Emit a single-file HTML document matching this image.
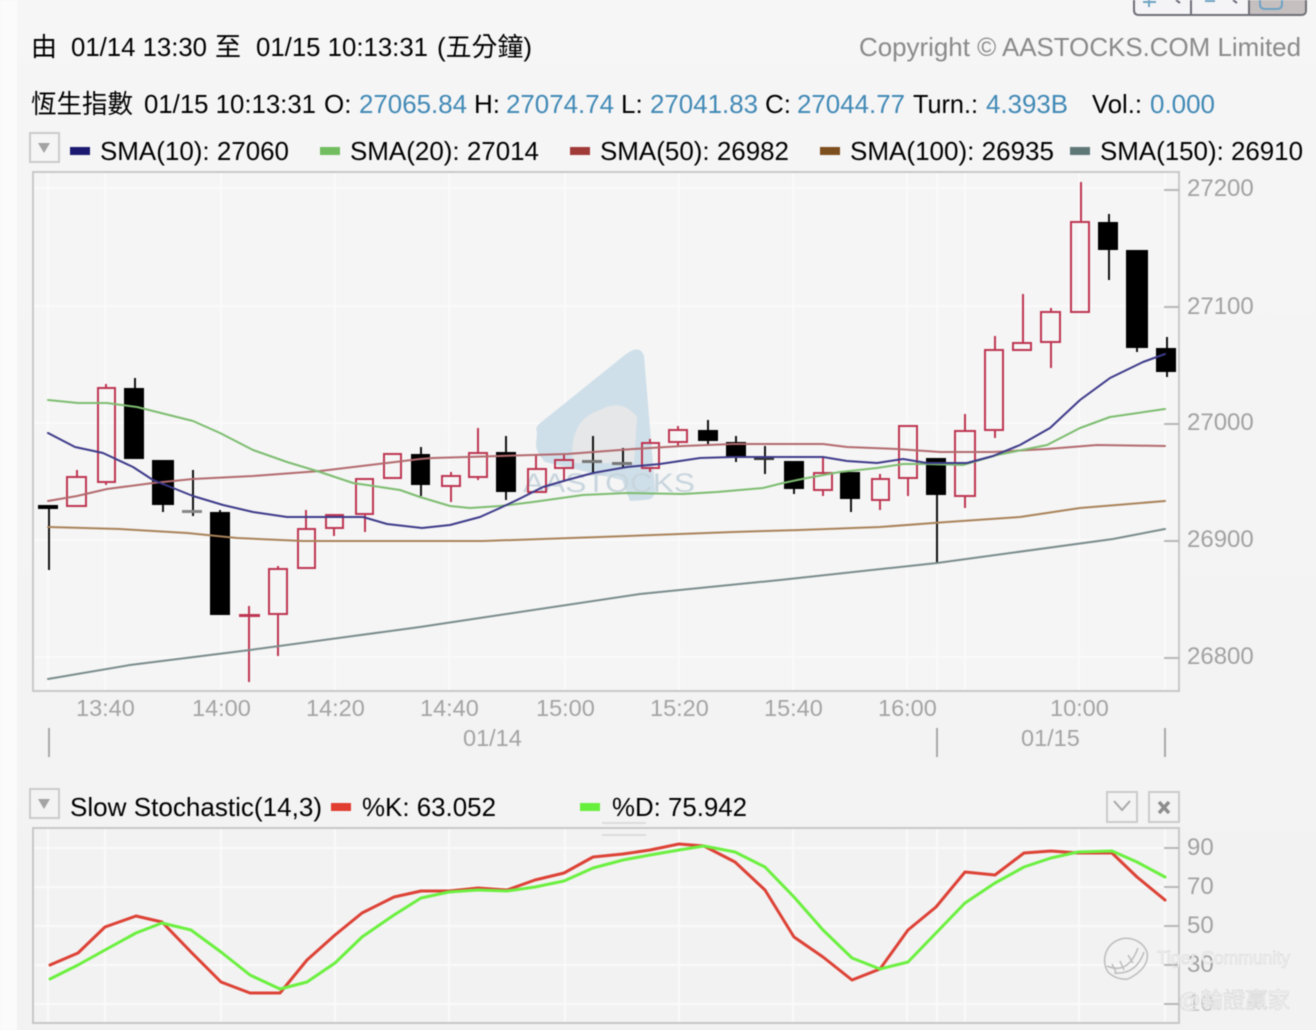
<!DOCTYPE html>
<html>
<head>
<meta charset="utf-8">
<style>
html,body{margin:0;padding:0;width:1316px;height:1030px;overflow:hidden;background:#f4f4f4}
svg{position:absolute;left:0;top:0;display:block;filter:blur(.45px)}
text{font-family:"Liberation Sans","Noto Sans CJK TC",sans-serif}
.t{font-size:26px;fill:#000}
.b{font-size:26px;fill:#4189b5}
.a{font-size:24px;fill:#a2a2a2}
.w line{stroke-width:2}
.r line{stroke:#bd3552}
.r rect{fill:none;stroke:#bd3552;stroke-width:2}
.k line{stroke:#111}
.k rect{fill:#000}
.l{fill:none;stroke-width:2;stroke-linejoin:round;stroke-linecap:round}
.g{stroke:#fafafa;stroke-width:2}
.tk{stroke:#b8b8b8;stroke-width:2}
.btn{fill:none;stroke:#cbcbcb;stroke-width:2}
</style>
</head>
<body>
<svg width="1316" height="1030" viewBox="0 0 1316 1030" xmlns="http://www.w3.org/2000/svg">
<defs>
<linearGradient id="bg" x1="0" y1="0" x2="0" y2="1"><stop offset="0" stop-color="#f6f6f7"/><stop offset="1" stop-color="#f2f2f2"/></linearGradient>
</defs>
<rect x="0" y="0" width="1316" height="1030" fill="url(#bg)"/>
<rect x="0" y="0" width="17" height="1030" fill="#fbfbfb"/>

<!-- toolbar -->
<path d="M1134 -4V10Q1134 15 1139 15H1301Q1306 15 1306 10V-4Z" fill="#f4f4f6" stroke="#6f6f78" stroke-width="2"/>
<path d="M1250 -2H1305V10Q1305 14 1301 14H1250Z" fill="#c6bfbf"/>
<line x1="1191" y1="0" x2="1191" y2="15" stroke="#6f6f78" stroke-width="2"/>
<line x1="1249" y1="0" x2="1249" y2="15" stroke="#6f6f78" stroke-width="2"/>
<path d="M1149 -2V7M1143 2H1156M1205 1H1215" stroke="#6ea3c4" stroke-width="2" fill="none"/>
<path d="M1176 0L1180 3M1233 0L1237 3" stroke="#667" stroke-width="2" fill="none"/>
<path d="M1260 -2V4Q1260 9 1265 9H1277Q1282 9 1282 4V-2" fill="none" stroke="#6ea3c4" stroke-width="2"/>

<!-- header text -->
<text class="t" x="31" y="56">由</text>
<text class="t" x="71" y="56" textLength="136" lengthAdjust="spacingAndGlyphs">01/14 13:30</text>
<text class="t" x="215" y="56">至</text>
<text class="t" x="256" y="56" textLength="172" lengthAdjust="spacingAndGlyphs">01/15 10:13:31</text>
<text class="t" x="437" y="56" textLength="95" lengthAdjust="spacingAndGlyphs">(五分鐘)</text>
<text x="859" y="56" font-size="26" fill="#8a8a8a" textLength="442" lengthAdjust="spacingAndGlyphs">Copyright © AASTOCKS.COM Limited</text>

<text class="t" x="31" y="113" textLength="102" lengthAdjust="spacingAndGlyphs">恆生指數</text>
<text class="t" x="144" y="113" textLength="172" lengthAdjust="spacingAndGlyphs">01/15 10:13:31</text>
<text class="t" x="324" y="113">O:</text>
<text class="b" x="359" y="113" textLength="108" lengthAdjust="spacingAndGlyphs">27065.84</text>
<text class="t" x="474" y="113">H:</text>
<text class="b" x="506" y="113" textLength="108" lengthAdjust="spacingAndGlyphs">27074.74</text>
<text class="t" x="621" y="113">L:</text>
<text class="b" x="650" y="113" textLength="108" lengthAdjust="spacingAndGlyphs">27041.83</text>
<text class="t" x="765" y="113">C:</text>
<text class="b" x="797" y="113" textLength="108" lengthAdjust="spacingAndGlyphs">27044.77</text>
<text class="t" x="913" y="113" textLength="65" lengthAdjust="spacingAndGlyphs">Turn.:</text>
<text class="b" x="986" y="113" textLength="82" lengthAdjust="spacingAndGlyphs">4.393B</text>
<text class="t" x="1092" y="113" textLength="50" lengthAdjust="spacingAndGlyphs">Vol.:</text>
<text class="b" x="1150" y="113" textLength="65" lengthAdjust="spacingAndGlyphs">0.000</text>

<!-- legend -->
<rect class="btn" x="30" y="133" width="29" height="29"/>
<path d="M38 143H50L44 153Z" fill="#a3a3a3"/>
<rect x="70" y="147" width="20" height="8" fill="#1c1a70"/>
<text class="t" x="100" y="160" textLength="189" lengthAdjust="spacingAndGlyphs">SMA(10): 27060</text>
<rect x="320" y="147" width="20" height="8" fill="#71bd60"/>
<text class="t" x="350" y="160" textLength="189" lengthAdjust="spacingAndGlyphs">SMA(20): 27014</text>
<rect x="570" y="147" width="20" height="8" fill="#a03a38"/>
<text class="t" x="600" y="160" textLength="189" lengthAdjust="spacingAndGlyphs">SMA(50): 26982</text>
<rect x="820" y="147" width="20" height="8" fill="#7d4e1e"/>
<text class="t" x="850" y="160" textLength="204" lengthAdjust="spacingAndGlyphs">SMA(100): 26935</text>
<rect x="1070" y="147" width="20" height="8" fill="#607777"/>
<text class="t" x="1100" y="160" textLength="203" lengthAdjust="spacingAndGlyphs">SMA(150): 26910</text>

<!-- main chart frame -->
<rect x="33" y="172" width="1146" height="519" fill="#f5f5f5"/>
<g class="g">
<line x1="34" y1="188" x2="1165" y2="188"/><line x1="34" y1="306" x2="1165" y2="306"/><line x1="34" y1="423" x2="1165" y2="423"/><line x1="34" y1="540" x2="1165" y2="540"/><line x1="34" y1="657" x2="1165" y2="657"/>
<line x1="48" y1="173" x2="48" y2="690"/><line x1="105" y1="173" x2="105" y2="690"/><line x1="221" y1="173" x2="221" y2="690"/><line x1="335" y1="173" x2="335" y2="690"/><line x1="449" y1="173" x2="449" y2="690"/><line x1="565" y1="173" x2="565" y2="690"/><line x1="679" y1="173" x2="679" y2="690"/><line x1="793" y1="173" x2="793" y2="690"/><line x1="907" y1="173" x2="907" y2="690"/><line x1="937" y1="173" x2="937" y2="690"/><line x1="965" y1="173" x2="965" y2="690"/><line x1="1079" y1="173" x2="1079" y2="690"/><line x1="1165" y1="173" x2="1165" y2="690"/>
</g>
<rect x="33" y="172" width="1146" height="519" fill="none" stroke="#c8c8c8" stroke-width="2"/>
<g class="tk"><line x1="1164" y1="190" x2="1179" y2="190"/><line x1="1164" y1="307" x2="1179" y2="307"/><line x1="1164" y1="424" x2="1179" y2="424"/><line x1="1164" y1="541" x2="1179" y2="541"/><line x1="1164" y1="658" x2="1179" y2="658"/></g>
<text class="a" x="1187" y="196">27200</text>
<text class="a" x="1187" y="314">27100</text>
<text class="a" x="1187" y="430">27000</text>
<text class="a" x="1187" y="547">26900</text>
<text class="a" x="1187" y="664">26800</text>

<!-- watermark logo -->
<path d="M537 432Q535 428 539 424L626 354Q640 344 644 356L655 488Q656 500 645 500L630 501Q625 488 622 480L545 462Q536 452 536 445Z" fill="#cfdfe9"/>
<path d="M573 463Q568 420 600 410Q622 398 637 417L634 463Z" fill="#e6e7e8"/>
<text x="523" y="492" font-size="27" fill="#c8d5dd" textLength="172" lengthAdjust="spacingAndGlyphs">AASTOCKS</text>

<!-- candles -->
<g class="w r">
<line x1="77" y1="470" x2="77" y2="476"/><rect x="67" y="477" width="19" height="29"/>
<line x1="106" y1="384" x2="106" y2="388"/><line x1="106" y1="482" x2="106" y2="485"/><rect x="98" y="388" width="17" height="94"/>
<line x1="249" y1="606" x2="249" y2="682"/><rect x="239" y="614" width="21" height="3" style="fill:#bd3552;stroke:none"/>
<line x1="278" y1="566" x2="278" y2="569"/><line x1="278" y1="614" x2="278" y2="656"/><rect x="269" y="569" width="18" height="45"/>
<line x1="306" y1="510" x2="306" y2="528"/><rect x="298" y="529" width="17" height="39"/>
<line x1="334" y1="528" x2="334" y2="536"/><rect x="326" y="515" width="17" height="13"/>
<line x1="365" y1="514" x2="365" y2="532"/><rect x="356" y="479" width="17" height="35"/>
<rect x="384" y="454" width="17" height="24"/>
<line x1="451" y1="472" x2="451" y2="476"/><line x1="451" y1="486" x2="451" y2="502"/><rect x="442" y="476" width="18" height="10"/>
<line x1="478" y1="428" x2="478" y2="453"/><line x1="478" y1="477" x2="478" y2="480"/><rect x="469" y="453" width="18" height="24"/>
<line x1="536" y1="455" x2="536" y2="468"/><rect x="528" y="469" width="18" height="23"/>
<line x1="564" y1="455" x2="564" y2="460"/><line x1="564" y1="468" x2="564" y2="480"/><rect x="555" y="460" width="18" height="8"/>
<line x1="650" y1="439" x2="650" y2="443"/><line x1="650" y1="468" x2="650" y2="472"/><rect x="642" y="443" width="17" height="25"/>
<line x1="678" y1="426" x2="678" y2="430"/><line x1="678" y1="442" x2="678" y2="446"/><rect x="669" y="430" width="18" height="12"/>
<line x1="823" y1="458" x2="823" y2="473"/><line x1="823" y1="490" x2="823" y2="496"/><rect x="814" y="473" width="18" height="17"/>
<line x1="880" y1="474" x2="880" y2="479"/><line x1="880" y1="500" x2="880" y2="510"/><rect x="872" y="479" width="17" height="21"/>
<line x1="908" y1="478" x2="908" y2="496"/><rect x="899" y="426" width="18" height="52"/>
<line x1="965" y1="414" x2="965" y2="431"/><line x1="965" y1="496" x2="965" y2="508"/><rect x="955" y="431" width="20" height="65"/>
<line x1="995" y1="336" x2="995" y2="350"/><line x1="995" y1="430" x2="995" y2="438"/><rect x="985" y="350" width="18" height="80"/>
<line x1="1023" y1="294" x2="1023" y2="342"/><rect x="1013" y="343" width="18" height="7"/>
<line x1="1051" y1="308" x2="1051" y2="312"/><line x1="1051" y1="342" x2="1051" y2="368"/><rect x="1041" y="312" width="19" height="30"/>
<line x1="1081" y1="182" x2="1081" y2="222"/><rect x="1071" y="222" width="18" height="90"/>
</g>
<g class="w k">
<line x1="49" y1="507" x2="49" y2="570"/><rect x="38" y="505" width="20" height="4"/>
<line x1="135" y1="378" x2="135" y2="390"/><rect x="124" y="388" width="20" height="71"/>
<line x1="163" y1="500" x2="163" y2="512"/><rect x="152" y="460" width="22" height="45"/>
<line x1="193" y1="470" x2="193" y2="516"/><rect x="182" y="510" width="20" height="3" style="fill:#888"/>
<line x1="220" y1="510" x2="220" y2="514"/><rect x="210" y="512" width="20" height="103"/>
<line x1="421" y1="447" x2="421" y2="496"/><rect x="411" y="454" width="19" height="31"/>
<line x1="506" y1="436" x2="506" y2="500"/><rect x="496" y="452" width="20" height="40"/>
<line x1="593" y1="436" x2="593" y2="474"/><rect x="582" y="460" width="20" height="3" style="fill:#777"/>
<line x1="623" y1="448" x2="623" y2="468"/><rect x="612" y="462" width="20" height="3" style="fill:#777"/>
<line x1="708" y1="420" x2="708" y2="444"/><rect x="698" y="430" width="20" height="11"/>
<line x1="736" y1="436" x2="736" y2="462"/><rect x="726" y="442" width="20" height="15"/>
<line x1="765" y1="446" x2="765" y2="474"/><rect x="754" y="457" width="20" height="3" style="fill:#333"/>
<line x1="794" y1="485" x2="794" y2="494"/><rect x="784" y="461" width="20" height="28"/>
<line x1="851" y1="495" x2="851" y2="512"/><rect x="840" y="472" width="20" height="27"/>
<line x1="937" y1="490" x2="937" y2="563"/><rect x="926" y="458" width="20" height="37"/>
<line x1="1109" y1="214" x2="1109" y2="280"/><rect x="1098" y="222" width="20" height="28"/>
<line x1="1137" y1="345" x2="1137" y2="352"/><rect x="1126" y="250" width="22" height="98"/>
<line x1="1167" y1="337" x2="1167" y2="377"/><rect x="1156" y="348" width="20" height="24"/>
</g>

<!-- MAs -->
<polyline class="l" stroke="#7a8b8b" points="48,679 130,665 250,650 420,627 640,594 780,580 937,563 1113,539 1165,529"/>
<polyline class="l" stroke="#a98259" points="48,527 120,529 187,533 237,538 303,541 420,541 483,541 600,537 733,532 800,530 880,527 947,522 1020,517 1080,508 1165,501"/>
<polyline class="l" stroke="#b36a6e" points="48,501 77,496 107,489 153,483 193,479 253,476 320,471 387,463 420,459 433,458 500,456 567,454 633,449 683,446 733,444 823,444 847,447 897,449 940,452 993,452 1047,449 1097,445 1165,446"/>
<polyline class="l" stroke="#7dbd70" points="48,400 78,403 107,403 137,407 193,421 220,433 253,450 287,462 320,472 353,483 400,490 420,497 450,506 470,508 500,506 533,502 583,495 627,493 683,494 717,492 763,488 783,483 807,478 840,472 877,468 903,464 927,464 963,465 997,455 1047,445 1080,428 1110,417 1165,409"/>
<polyline class="l" stroke="#3d3a8a" points="48,433 75,447 103,453 133,467 153,480 193,496 223,505 253,512 287,517 320,517 363,517 387,524 422,528 450,525 480,517 500,508 517,500 543,487 567,480 593,473 627,467 660,464 700,458 733,457 800,457 823,457 847,461 877,463 903,459 927,463 967,463 993,456 1020,445 1050,428 1080,400 1110,378 1143,362 1165,354"/>

<!-- x labels -->
<g font-size="23.5" fill="#a4a4a4">
<text x="76" y="716">13:40</text><text x="192" y="716">14:00</text><text x="306" y="716">14:20</text><text x="420" y="716">14:40</text><text x="536" y="716">15:00</text><text x="650" y="716">15:20</text><text x="764" y="716">15:40</text><text x="878" y="716">16:00</text><text x="1050" y="716">10:00</text>
<text x="463" y="746">01/14</text><text x="1021" y="746">01/15</text>
</g>
<g stroke="#a8a8a8" stroke-width="2"><line x1="49" y1="728" x2="49" y2="757"/><line x1="937" y1="728" x2="937" y2="757"/><line x1="1165" y1="728" x2="1165" y2="757"/></g>

<!-- lower legend -->
<rect class="btn" x="30" y="789" width="29" height="29"/>
<path d="M38 799H50L44 809Z" fill="#a3a3a3"/>
<text class="t" x="70" y="816" textLength="252" lengthAdjust="spacingAndGlyphs">Slow Stochastic(14,3)</text>
<rect x="331" y="803" width="20" height="8" fill="#e03c2f"/>
<text class="t" x="362" y="816" textLength="134" lengthAdjust="spacingAndGlyphs">%K: 63.052</text>
<rect x="580" y="803" width="20" height="8" fill="#66f03c"/>
<text class="t" x="612" y="816" textLength="135" lengthAdjust="spacingAndGlyphs">%D: 75.942</text>
<rect class="btn" x="1107" y="792" width="30" height="30"/>
<path d="M1114 801L1122 810L1130 801" fill="none" stroke="#a8a8a8" stroke-width="2"/>
<rect class="btn" x="1149" y="792" width="30" height="30"/>
<path d="M1159 802L1169 813M1169 802L1159 813" fill="none" stroke="#8d8d8d" stroke-width="3.5"/>

<!-- lower chart -->
<rect x="33" y="828" width="1146" height="195" fill="#f2f2f2"/>
<g class="g">
<line x1="34" y1="848" x2="1165" y2="848"/><line x1="34" y1="887" x2="1165" y2="887"/><line x1="34" y1="926" x2="1165" y2="926"/><line x1="34" y1="965" x2="1165" y2="965"/><line x1="34" y1="1004" x2="1165" y2="1004"/>
<line x1="48" y1="829" x2="48" y2="1022"/><line x1="105" y1="829" x2="105" y2="1022"/><line x1="221" y1="829" x2="221" y2="1022"/><line x1="335" y1="829" x2="335" y2="1022"/><line x1="449" y1="829" x2="449" y2="1022"/><line x1="565" y1="829" x2="565" y2="1022"/><line x1="679" y1="829" x2="679" y2="1022"/><line x1="793" y1="829" x2="793" y2="1022"/><line x1="907" y1="829" x2="907" y2="1022"/><line x1="937" y1="829" x2="937" y2="1022"/><line x1="965" y1="829" x2="965" y2="1022"/><line x1="1079" y1="829" x2="1079" y2="1022"/><line x1="1165" y1="829" x2="1165" y2="1022"/>
</g>
<rect x="33" y="828" width="1146" height="195" fill="none" stroke="#c8c8c8" stroke-width="2"/>
<g class="tk"><line x1="1164" y1="848" x2="1179" y2="848"/><line x1="1164" y1="887" x2="1179" y2="887"/><line x1="1164" y1="926" x2="1179" y2="926"/><line x1="1164" y1="965" x2="1179" y2="965"/><line x1="1164" y1="1004" x2="1179" y2="1004"/></g>
<text class="a" x="1187" y="855">90</text>
<text class="a" x="1187" y="894">70</text>
<text class="a" x="1187" y="933">50</text>
<text class="a" x="1187" y="972">30</text>
<text class="a" x="1187" y="1011" opacity=".5">10</text>
<path d="M602 823H646M602 835H646" stroke="#dcdcdc" stroke-width="2"/>

<polyline class="l" stroke="#dd4236" style="stroke-width:3" points="50,965 78,953 105,927 136,916 162,922 191,952 221,982 250,993 280,993 307,960 335,935 362,913 394,897 421,891 449,891 478,888 507,890 535,880 564,873 593,857 623,854 650,850 679,844 704,846 735,862 765,890 794,937 823,957 852,980 880,969 908,930 936,907 965,872 995,875 1024,853 1051,851 1078,853 1112,853 1137,877 1165,900"/>
<polyline class="l" stroke="#6cf040" style="stroke-width:3" points="50,979 78,965 105,950 136,933 162,923 191,930 221,952 250,975 280,989 307,982 335,963 362,937 394,915 421,898 449,892 478,890 507,891 535,887 564,881 593,868 623,860 650,855 679,850 704,846 735,852 765,867 794,897 823,930 852,958 880,969 908,962 936,933 965,903 995,883 1024,867 1051,858 1078,852 1112,851 1137,862 1165,877"/>

<!-- tiger community watermark -->
<g fill="none" stroke="#bcbcbc" stroke-width="1.5">
<path d="M1108 972A22 22 0 1 1 1147 952Q1150 968 1128 979Q1116 980 1108 972"/>
<path d="M1107 966Q1128 975 1138 948M1114 973Q1136 975 1144 952M1112 964L1116 972M1120 961L1124 970M1128 955L1133 963"/>
</g>
<text x="1157" y="964" font-size="18" fill="#f4f4f4" stroke="#c0c0c0" stroke-width=".3" textLength="133" lengthAdjust="spacingAndGlyphs">Tiger Community</text>
<text x="1178" y="1008" font-size="22" fill="#f4f4f4" stroke="#bcbcbc" stroke-width=".3" textLength="112" lengthAdjust="spacingAndGlyphs">@輪證贏家</text>
</svg>
</body>
</html>
